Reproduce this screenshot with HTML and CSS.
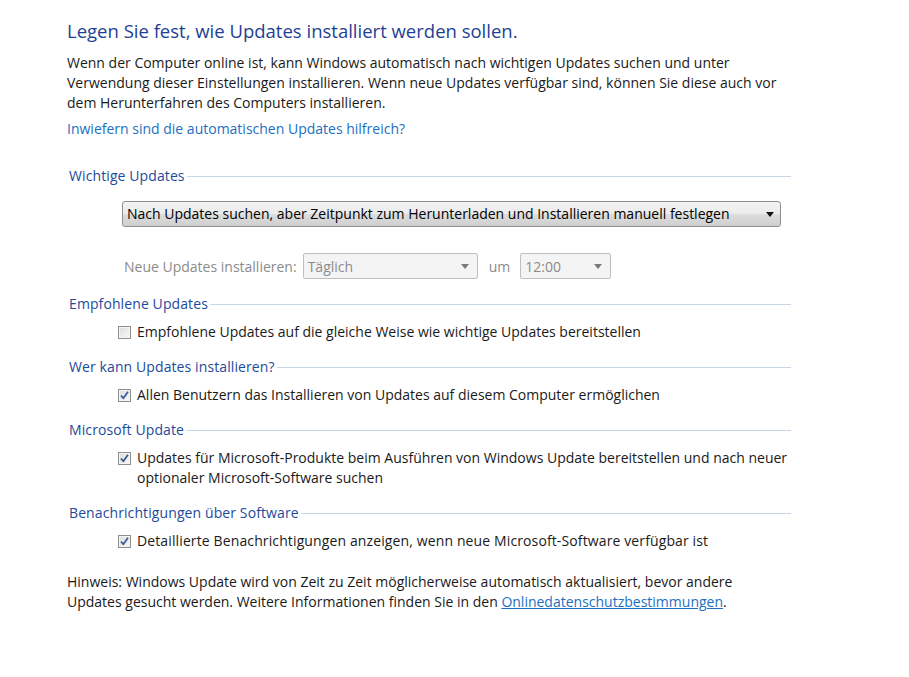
FILE: index.html
```html
<!DOCTYPE html>
<html lang="de">
<head>
<meta charset="utf-8">
<title>Windows Update – Einstellungen ändern</title>
<link rel="stylesheet" href="styles.css">
</head>
<body>
<div class="page">
  <h1 class="title">Legen Sie fest, wie Updates installiert werden sollen.</h1>
  <p class="intro">Wenn der Computer online ist, kann Windows automatisch nach wichtigen Updates suchen und unter Verwendung dieser Einstellungen installieren. Wenn neue Updates verfügbar sind, können Sie diese auch vor dem Herunterfahren des Computers installieren.</p>
  <a class="help-link" href="#">Inwiefern sind die automatischen Updates hilfreich?</a>

  <div class="section-head first"><span>Wichtige Updates</span></div>
  <div class="main-select">
    <span class="sel-text">Nach Updates suchen, aber Zeitpunkt zum Herunterladen und Installieren manuell festlegen</span>
    <span class="arrow"></span>
  </div>
  <div class="schedule">
    <span class="sched-label">Neue Updates installieren:</span>
    <div class="small-select day"><span>Täglich</span><span class="arrow dim"></span></div>
    <span class="sched-um">um</span>
    <div class="small-select time"><span>12:00</span><span class="arrow dim"></span></div>
  </div>

  <div class="section-head"><span>Empfohlene Updates</span></div>
  <div class="option">
    <span class="cb"></span>
    <span class="opt-text">Empfohlene Updates auf die gleiche Weise wie wichtige Updates bereitstellen</span>
  </div>

  <div class="section-head"><span>Wer kann Updates installieren?</span></div>
  <div class="option">
    <span class="cb checked"><svg viewBox="0 0 11 11" width="11" height="11"><path d="M2 5.5 L4.3 8.3 L9 1.8" fill="none" stroke="#3c5a9a" stroke-width="1.8" stroke-linejoin="round"/></svg></span>
    <span class="opt-text">Allen Benutzern das Installieren von Updates auf diesem Computer ermöglichen</span>
  </div>

  <div class="section-head"><span>Microsoft Update</span></div>
  <div class="option">
    <span class="cb checked"><svg viewBox="0 0 11 11" width="11" height="11"><path d="M2 5.5 L4.3 8.3 L9 1.8" fill="none" stroke="#3c5a9a" stroke-width="1.8" stroke-linejoin="round"/></svg></span>
    <span class="opt-text">Updates für Microsoft-Produkte beim Ausführen von Windows Update bereitstellen und nach neuer optionaler Microsoft-Software suchen</span>
  </div>

  <div class="section-head"><span>Benachrichtigungen über Software</span></div>
  <div class="option">
    <span class="cb checked"><svg viewBox="0 0 11 11" width="11" height="11"><path d="M2 5.5 L4.3 8.3 L9 1.8" fill="none" stroke="#3c5a9a" stroke-width="1.8" stroke-linejoin="round"/></svg></span>
    <span class="opt-text wide">Detaillierte Benachrichtigungen anzeigen, wenn neue Microsoft-Software verfügbar ist</span>
  </div>

  <p class="note">Hinweis: Windows Update wird von Zeit zu Zeit möglicherweise automatisch aktualisiert, bevor andere Updates gesucht werden. Weitere Informationen finden Sie in den <a href="#" class="note-link">Onlinedatenschutzbestimmungen</a>.</p>
</div>
</body>
</html>
```

FILE: styles.css
```css
html, body {
  margin: 0;
  padding: 0;
  background: #ffffff;
}
body {
  font-family: "Open Sans", "Noto Sans", "Liberation Sans", sans-serif;
  font-size: 14px;
  color: #1a1a1a;
}
.page {
  width: 724px;
  padding: 17px 0 40px 67px;
}
.title {
  margin: 0;
  font-size: 18.5px;
  font-weight: normal;
  line-height: 28px;
  color: #1e3f94;
}
.intro {
  margin: 8px 0 0 0;
  line-height: 20px;
}
.help-link {
  display: block;
  margin-top: 6px;
  line-height: 20px;
  color: #1c6fc2;
  text-decoration: none;
}
.section-head {
  display: flex;
  align-items: center;
  margin-top: 15px;
  padding-left: 2px;
  line-height: 20px;
  color: #1e4a9c;
  letter-spacing: 0.1px;
}
.section-head.first {
  margin-top: 27px;
}
.section-head::after {
  content: "";
  flex: 1;
  height: 1px;
  background: #c9d6e8;
  margin-left: 2px;
}
.main-select {
  display: flex;
  align-items: center;
  justify-content: space-between;
  margin: 15px 0 0 55px;
  height: 24px;
  border: 1px solid #8e8f8f;
  border-radius: 3px;
  background: linear-gradient(#f2f2f2 0%, #ebebeb 50%, #dddddd 51%, #cfcfcf 100%);
  padding: 0 6px 0 4px;
  width: 647px;
}
.sel-text {
  color: #000;
  line-height: 20px;
}
.arrow {
  width: 0;
  height: 0;
  border-left: 4px solid transparent;
  border-right: 4px solid transparent;
  border-top: 5px solid #111;
}
.arrow.dim {
  border-top-color: #7a7a7a;
}
.schedule {
  display: flex;
  align-items: center;
  margin: 26px 0 0 57px;
  height: 26px;
  color: #8b8b8b;
}
.sched-label {
  margin-right: 6px;
}
.small-select {
  display: flex;
  align-items: center;
  justify-content: space-between;
  height: 24px;
  border: 1px solid #bfbfbf;
  border-radius: 2px;
  background: #f4f4f4;
  padding: 0 8px 0 4px;
  color: #8b8b8b;
}
.small-select.day {
  width: 161px;
}
.small-select.time {
  width: 77px;
}
.sched-um {
  margin: 0 10px 0 11px;
}
.option {
  display: flex;
  align-items: flex-start;
  margin: 8px -6px 0 51px;
  line-height: 20px;
}
.cb {
  flex: none;
  box-sizing: border-box;
  width: 13px;
  height: 13px;
  margin: 4px 6px 0 0;
  border: 1px solid #8e8f8f;
  background: linear-gradient(135deg, #dcdcdc, #f8f8f8);
  box-shadow: inset 0 0 0 1px #f4f4f4;
  display: flex;
  align-items: center;
  justify-content: center;
}
.cb svg {
  display: block;
}
.opt-text {
  color: #1a1a1a;
}
.opt-text.wide {
  letter-spacing: 0.12px;
}
.note {
  margin: 21px 0 0 0;
  line-height: 20px;
  max-width: 690px;
}
.note-link {
  color: #1c6fc2;
  text-decoration: underline;
}
```
